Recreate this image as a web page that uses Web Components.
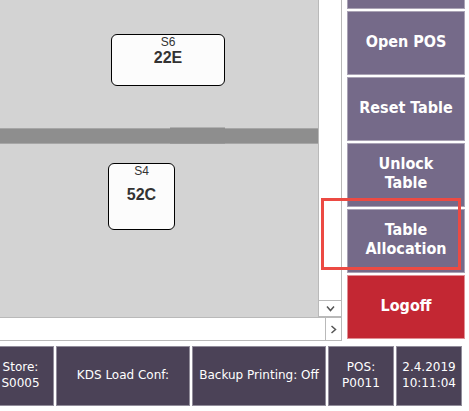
<!DOCTYPE html>
<html lang="en">
<head>
<meta charset="utf-8">
<title>Table plan</title>
<style>
html, body { margin: 0; background: #fff; }
</style>
</head>
<body>
<pos-screen></pos-screen>
<script>
class PosElement extends HTMLElement {
  constructor() {
    super();
    this.attachShadow({ mode: "open" }).innerHTML = this.constructor.markup;
  }
}

customElements.define("pos-action", class extends PosElement {
  static markup = `
    <style>
      :host { display: grid; min-height: 64px; }
      :host([partial]) { min-height: 9px; }
      button {
        display: flex; align-items: center; justify-content: center;
        box-sizing: border-box; width: 100%; height: 100%;
        margin: 0; padding: 0 4px 4px;
        border: 1px solid #aaa3b5; background: #756a89; color: #fff;
        font: bold 16px/19px "DejaVu Sans Condensed", "DejaVu Sans", sans-serif; text-align: center;
      }
      :host([partial]) button { border-top: 0; padding: 0; }
      :host([danger]) button { background: #c32733; border-color: #e08f95; }
    </style>
    <button type="button"><span><slot></slot></span></button>`;
  connectedCallback() {
    const label = this.getAttribute("label");
    if (label) this.shadowRoot.querySelector("button").setAttribute("aria-label", label);
  }
});

customElements.define("pos-table", class extends PosElement {
  static markup = `
    <style>
      :host { display: grid; }
      button {
        display: grid; box-sizing: border-box; width: 100%; height: 100%;
        margin: 0; padding: 0; border: 1px solid #000; border-radius: 6px;
        background: #fcfcfc; color: #333; text-align: center;
        font-family: "Liberation Sans", Arial, sans-serif;
      }
      .seats, .name { grid-area: 1 / 1; }
      .seats { align-self: start; font-size: 12px; line-height: 14px; }
      .name { align-self: center; padding-bottom: 4px; font-weight: bold; font-size: 16px; line-height: 18px; }
    </style>
    <button type="button">
      <span class="seats"><slot name="seats"></slot></span>
      <span class="name"><slot></slot></span>
    </button>`;
});

customElements.define("floor-plan", class extends PosElement {
  static markup = `
    <style>
      :host { display: block; position: relative; overflow: hidden; background: #d3d3d3; }
      .wall, ::slotted(*) { position: absolute; }
      .wall {
        left: 0; right: 0; top: 128px; height: 16px; box-sizing: border-box;
        background: #8e8e8e; border: solid #a6a6a6; border-width: 1px 0;
      }
      .door { left: 170px; right: auto; top: 127px; width: 55px; height: 17px; border-color: #b0b0b0 transparent #999; }
    </style>
    <div class="wall"></div><div class="wall door"></div>
    <slot></slot>`;
});

customElements.define("scroll-strip", class extends PosElement {
  static markup = `
    <style>
      :host { display: flex; justify-content: flex-end; background: #fff; }
      :host([vertical]) { flex-direction: column; }
      button {
        display: grid; place-items: center; box-sizing: border-box; margin: 0; padding: 0;
        width: 16px; border: 0 solid #b9b9b9; border-left-width: 1px; background: #fff;
      }
      :host([vertical]) button { width: auto; height: 17px; border-width: 1px 0; }
      svg { display: block; width: 9px; height: 9px; fill: none; stroke: #555; stroke-width: 1.5; }
      :host([vertical]) svg { transform: rotate(90deg); }
    </style>
    <button type="button"><svg viewBox="0 0 9 9"><path d="M2.5 1 6.5 4.5 2.5 8"/></svg></button>`;
  connectedCallback() {
    this.shadowRoot.querySelector("button").setAttribute("aria-label",
      this.hasAttribute("vertical") ? "Scroll down" : "Scroll right");
  }
});

customElements.define("status-cell", class extends PosElement {
  static markup = `
    <style>
      :host {
        display: flex; align-items: center; justify-content: center;
        box-sizing: border-box; min-height: 60px; padding-bottom: 2px;
        border: 1px solid #928d9b; background: #4b4257; color: #fff;
        font: 12px/16px "DejaVu Sans", Verdana, sans-serif; text-align: center; white-space: nowrap;
      }
      :host([first]) { border-left: 0; padding-right: 12px; }
    </style>
    <span><slot></slot></span>`;
});

customElements.define("pos-screen", class extends PosElement {
  static markup = `
    <style>
      :host { display: grid; row-gap: 7px; }
      main { display: grid; grid-template-columns: minmax(0, 1fr) 118px; column-gap: 5px; padding-right: 4px; }
      .view {
        display: grid; grid-template: minmax(0, 1fr) 22px / minmax(0, 1fr) 22px; gap: 1px;
        box-sizing: border-box; margin-bottom: -2px;
        background: #b9b9b9; border: solid #b9b9b9; border-width: 0 1px 1px 0;
      }
      .across { grid-column: 1 / -1; }
      .actions { display: grid; gap: 2px; align-content: start; }
      footer { display: grid; grid-template-columns: 54fr 134fr 134fr 66fr 66fr; gap: 2px; padding-right: 7px; }
      .s6 { left: 111px; top: 34px; width: 114px; height: 52px; }
      .s4 { left: 108px; top: 163px; width: 67px; height: 67px; }
      .marker {
        position: absolute; box-sizing: border-box; top: 198px; right: 8px;
        width: 140px; height: 72px; border: 3px solid #ec4a43; pointer-events: none;
      }
    </style>
    <main>
      <section class="view">
        <floor-plan>
          <pos-table class="s6"><span slot="seats">S6</span>22E</pos-table>
          <pos-table class="s4"><span slot="seats">S4</span>52C</pos-table>
        </floor-plan>
        <scroll-strip vertical></scroll-strip>
        <scroll-strip class="across"></scroll-strip>
      </section>
      <nav class="actions">
        <pos-action partial label="Previous action"></pos-action>
        <pos-action>Open POS</pos-action>
        <pos-action>Reset Table</pos-action>
        <pos-action>Unlock<br>Table</pos-action>
        <pos-action>Table<br>Allocation</pos-action>
        <pos-action danger>Logoff</pos-action>
      </nav>
    </main>
    <footer>
      <status-cell first>Store:<br>S0005</status-cell>
      <status-cell>KDS Load Conf:</status-cell>
      <status-cell>Backup Printing: Off</status-cell>
      <status-cell>POS:<br>P0011</status-cell>
      <status-cell>2.4.2019<br>10:11:04</status-cell>
    </footer>
    <div class="marker"></div>`;
});
</script>
</body>
</html>
